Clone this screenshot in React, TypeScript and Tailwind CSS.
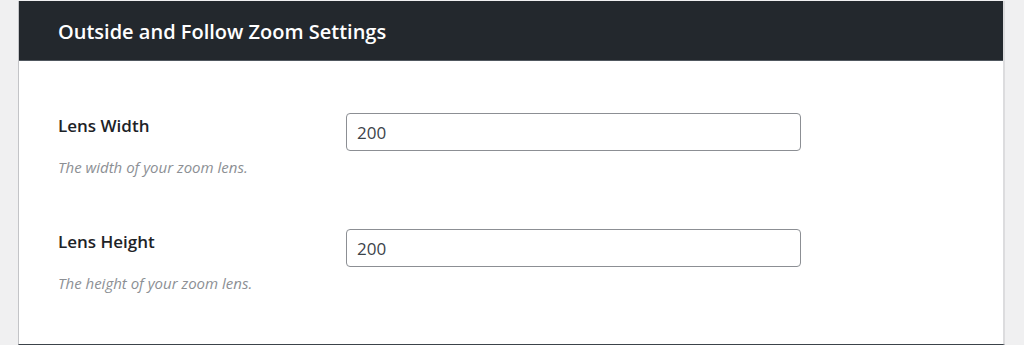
import React from 'react'

interface FieldProps {
  label: string
  description: string
  value: string
}

function Field({ label, description, value }: FieldProps) {
  return (
    <div className="flex h-[64px] items-start">
      <div className="w-[288px] shrink-0">
        <div className="pt-[1px] text-[17px] leading-[24px] font-semibold text-[#1d2327]">{label}</div>
        <p className="mt-[19px] text-[15px] leading-[20px] italic text-[#8c8f94]">{description}</p>
      </div>
      <input
        type="text"
        defaultValue={value}
        className="h-[38px] w-[455px] rounded-[4px] border border-[#8c8f94] bg-white px-[10px] text-[17px] text-[#3c434a] outline-none"
      />
    </div>
  )
}

export default function App() {
  return (
    <div
      className="h-[345px] w-[1024px] overflow-hidden bg-[#f0f0f1] pt-[1px]"
      style={{ fontFamily: '"Open Sans", "Noto Sans", sans-serif' }}
    >
      <div className="ml-[18px] h-[344px] w-[987px] border-l border-r-2 border-b border-l-[#c3c4c7] border-r-[#dcdcde] border-b-[#3c434a] bg-white">
        {/* Panel header */}
        <div className="h-[60px] border-b border-[#50575e] bg-[#23282d] pl-[39px] pt-[17px]">
          <h2 className="text-[20px] leading-[28px] font-semibold text-white">Outside and Follow Zoom Settings</h2>
        </div>

        <div className="flex flex-col gap-[52px] pl-[39px] pt-[52px]">
          <Field label="Lens Width" description="The width of your zoom lens." value="200" />
          <Field label="Lens Height" description="The height of your zoom lens." value="200" />
        </div>
      </div>
    </div>
  )
}
